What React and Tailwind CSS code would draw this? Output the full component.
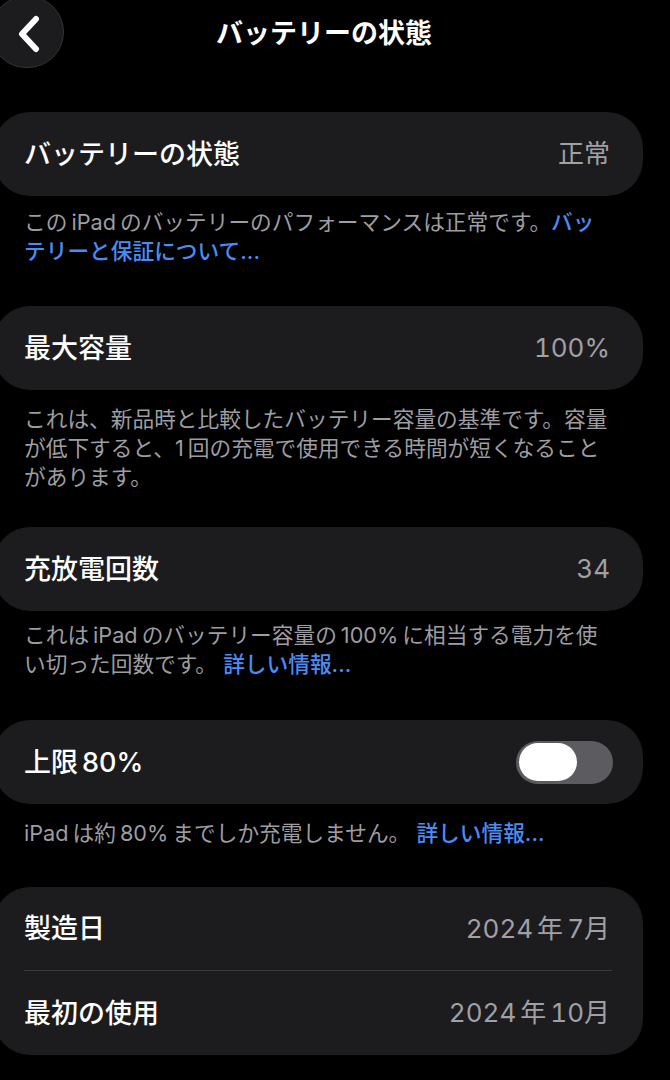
import React from "react";

const font = { fontFamily: '"Inter", "Noto Sans CJK JP", sans-serif' };

function Card({ children, className = "" }) {
  return (
    <div className={"-ml-[6px] w-[649px] bg-[#1c1c1e] rounded-[36px] " + className}>
      {children}
    </div>
  );
}

const L = ({ children, l = true, r = true }) => (
  <span className={(l ? "ml-[4px] " : "") + (r ? "mr-[4px]" : "")}>{children}</span>
);

function Row({ label, value, right }) {
  return (
    <div className="h-[84px] flex items-center justify-between pl-[30px] pr-[33px]">
      <span className="text-[27px] font-medium text-white leading-none">{label}</span>
      {right ? right : <span className="text-[26px] text-[#a0a0a5] leading-none tabular-nums">{value}</span>}
    </div>
  );
}

function Desc({ children, className = "" }) {
  return (
    <div className={"pl-[24px] w-[670px] text-[21.7px] leading-[29px] text-[#9d9da2] whitespace-nowrap " + className}>
      {children}
    </div>
  );
}

const Link = ({ children }) => <span className="text-[#4a8cf6] font-medium">{children}</span>;

export default function App() {
  return (
    <div className="w-[670px] h-[1080px] bg-black overflow-hidden" style={font}>
      <div className="h-[112px] flex items-start">
        <div className="w-[74px] h-[72px] -ml-[10px] -mt-[4px] rounded-full bg-[#1c1c1e] border border-[#333335] flex items-center justify-center shrink-0">
          <svg width="26" height="38" viewBox="0 0 26 38" className="ml-[4px] mt-[3px]">
            <path d="M20 4 L6 19 L20 34" fill="none" stroke="white" strokeWidth="6" strokeLinecap="round" strokeLinejoin="round" />
          </svg>
        </div>
        <div className="flex-1 h-[66px] flex items-center justify-center pr-[86px]">
          <span className="text-[27px] font-bold text-white leading-none">バッテリーの状態</span>
        </div>
      </div>

      <Card>
        <Row label="バッテリーの状態" value="正常" />
      </Card>
      <Desc className="mt-[12px] mb-[40px]">
        この<L>iPad</L>のバッテリーのパフォーマンスは正常です。<Link>バッ</Link>
        <br />
        <Link>テリーと保証について...</Link>
      </Desc>

      <Card>
        <Row label="最大容量" value="100%" />
      </Card>
      <Desc className="mt-[15px] mb-[35px]">
        これは、新品時と比較したバッテリー容量の基準です。容量
        <br />
        が低下すると、<L l={false}>1</L>回の充電で使用できる時間が短くなること
        <br />
        があります。
      </Desc>

      <Card>
        <Row label="充放電回数" value="34" />
      </Card>
      <Desc className="mt-[10px] mb-[41px]">
        これは<L>iPad</L>のバッテリー容量の<L>100%</L>に相当する電力を使
        <br />
        い切った回数です。 <Link>詳しい情報...</Link>
      </Desc>

      <Card>
        <Row
          label={<>上限<L r={false}>80%</L></>}
          right={
            <div className="w-[97px] h-[43px] rounded-full bg-[#5b5b60] flex items-center pl-[3px] -mr-[3px]">
              <div className="w-[58px] h-[38px] rounded-full bg-white" />
            </div>
          }
        />
      </Card>
      <Desc className="mt-[15px] mb-[39px]">
        <L l={false}>iPad</L>は約<L>80%</L>までしか充電しません。 <Link>詳しい情報...</Link>
      </Desc>

      <Card>
        <div className="h-[83px] flex items-center justify-between pl-[30px] pr-[33px]">
          <span className="text-[27px] font-medium text-white leading-none">製造日</span>
          <span className="text-[26px] text-[#a0a0a5] leading-none tabular-nums">2024<L>年</L>7月</span>
        </div>
        <div className="ml-[30px] mr-[31px] h-px bg-[#3a3a3c]" />
        <div className="h-[84px] flex items-center justify-between pl-[30px] pr-[33px]">
          <span className="text-[27px] font-medium text-white leading-none">最初の使用</span>
          <span className="text-[26px] text-[#a0a0a5] leading-none tabular-nums">2024<L>年</L>10月</span>
        </div>
      </Card>
    </div>
  );
}
